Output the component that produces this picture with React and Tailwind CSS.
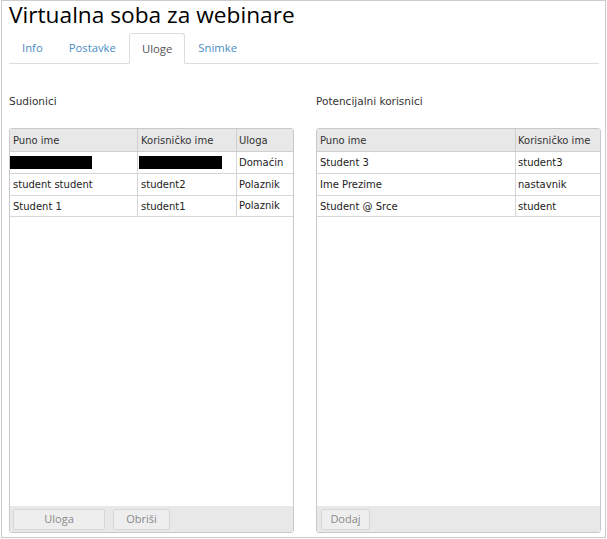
import React from "react";

const dv = { fontFamily: '"DejaVu Sans", Verdana, sans-serif' };
const os = { fontFamily: '"Open Sans", "Noto Sans", sans-serif' };

function Redact({ w }) {
  return <div className="h-[13px] bg-black" style={{ width: w }} />;
}

function Btn({ children, w }) {
  return (
    <div
      className="h-[21px] flex items-center justify-center rounded-[2px] border border-[#d6d6d6] bg-[#eeeeee] text-[11px] text-[#8a8a8a]"
      style={{ ...os, width: w }}
    >
      {children}
    </div>
  );
}

export default function App() {
  const tabs = ["Info", "Postavke", "Uloge", "Snimke"];
  return (
    <div className="w-[607px] h-[539px] bg-white">
      <div className="ml-[1px] w-[605px] h-[538px] border border-[#cccccc] flex flex-col">
        <div className="pl-[7px] text-[22.7px] leading-[30px] -mt-[1px] text-black" style={os}>
          Virtualna soba za webinare
        </div>
        <div className="mt-[3px] ml-[7px] mr-[6px] flex border-b border-[#dddddd] h-[31px]" style={os}>
          {tabs.map((t) =>
            t === "Uloge" ? (
              <div
                key={t}
                className="-mb-px px-[12px] pt-[1px] flex items-center border border-[#dddddd] border-b-white rounded-t-[3px] bg-white text-[11.3px] text-[#555555]"
              >
                {t}
              </div>
            ) : (
              <div key={t} className="px-[12px] pt-[1px] flex items-center border border-transparent text-[11.3px] text-[#4a8cc4]">
                {t}
              </div>
            )
          )}
        </div>
        <div className="flex-1 flex ml-[7px] gap-[22px] pb-[4px]">
          {/* Left panel */}
          <div className="w-[285px] flex flex-col">
            <div className="mt-[30px] h-[14px] leading-[14px] text-[10.5px] text-[#333]" style={dv}>
              Sudionici
            </div>
            <div className="mt-[20px] flex-1 flex flex-col border border-[#c9c9c9] rounded-[3px] overflow-hidden" style={dv}>
              <div className="grid grid-cols-[128px_99px_1fr] h-[23px] bg-[#e8e8e8] border-b border-[#cfcfcf] text-[10px] text-[#333]">
                <div className="px-[3px] flex items-center border-r border-[#cfcfcf]">Puno ime</div>
                <div className="px-[3px] flex items-center border-r border-[#cfcfcf]">Korisničko ime</div>
                <div className="px-[2px] flex items-center">Uloga</div>
              </div>
              <div className="grid grid-cols-[128px_99px_1fr] h-[22px] border-b border-[#d6d6d6] text-[10px] text-[#222]">
                <div className="flex items-center border-r border-[#d6d6d6]">
                  <Redact w={82} />
                </div>
                <div className="pl-[1px] flex items-center border-r border-[#d6d6d6]">
                  <Redact w={83} />
                </div>
                <div className="px-[2px] flex items-center">Domaćin</div>
              </div>
              <div className="grid grid-cols-[128px_99px_1fr] h-[22px] border-b border-[#d6d6d6] text-[10px] text-[#222]">
                <div className="px-[3px] flex items-center border-r border-[#d6d6d6]">student student</div>
                <div className="px-[3px] flex items-center border-r border-[#d6d6d6]">student2</div>
                <div className="px-[2px] pt-[3px]">Polaznik</div>
              </div>
              <div className="grid grid-cols-[128px_99px_1fr] h-[21px] border-b border-[#d6d6d6] text-[10px] text-[#222]">
                <div className="px-[3px] flex items-center border-r border-[#d6d6d6]">Student 1</div>
                <div className="px-[3px] flex items-center border-r border-[#d6d6d6]">student1</div>
                <div className="px-[2px] pt-[2px]">Polaznik</div>
              </div>
              <div className="flex-1 bg-white" />
              <div className="h-[26px] bg-[#e8e8e8] flex items-center gap-[8px] pl-[3px]">
                <Btn w={92}>Uloga</Btn>
                <Btn w={57}>Obriši</Btn>
              </div>
            </div>
          </div>
          {/* Right panel */}
          <div className="w-[285px] flex flex-col">
            <div className="mt-[30px] h-[14px] leading-[14px] text-[10.5px] text-[#333]" style={dv}>
              Potencijalni korisnici
            </div>
            <div className="mt-[20px] flex-1 flex flex-col border border-[#c9c9c9] rounded-[3px] overflow-hidden" style={dv}>
              <div className="grid grid-cols-[199px_1fr] h-[23px] bg-[#e8e8e8] border-b border-[#cfcfcf] text-[10px] text-[#333]">
                <div className="px-[3px] flex items-center border-r border-[#cfcfcf]">Puno ime</div>
                <div className="px-[2px] flex items-center">Korisničko ime</div>
              </div>
              {[
                ["Student 3", "student3"],
                ["Ime Prezime", "nastavnik"],
                ["Student @ Srce", "student"],
              ].map(([a, b], i) => (
                <div
                  key={a}
                  className={`grid grid-cols-[199px_1fr] ${i === 2 ? "h-[21px]" : "h-[22px]"} border-b border-[#d6d6d6] text-[10px] text-[#222]`}
                >
                  <div className="px-[3px] flex items-center border-r border-[#d6d6d6]">{a}</div>
                  <div className="px-[2px] flex items-center">{b}</div>
                </div>
              ))}
              <div className="flex-1 bg-white" />
              <div className="h-[26px] bg-[#e8e8e8] flex items-center pl-[4px]">
                <Btn w={49}>Dodaj</Btn>
              </div>
            </div>
          </div>
        </div>
      </div>
    </div>
  );
}
